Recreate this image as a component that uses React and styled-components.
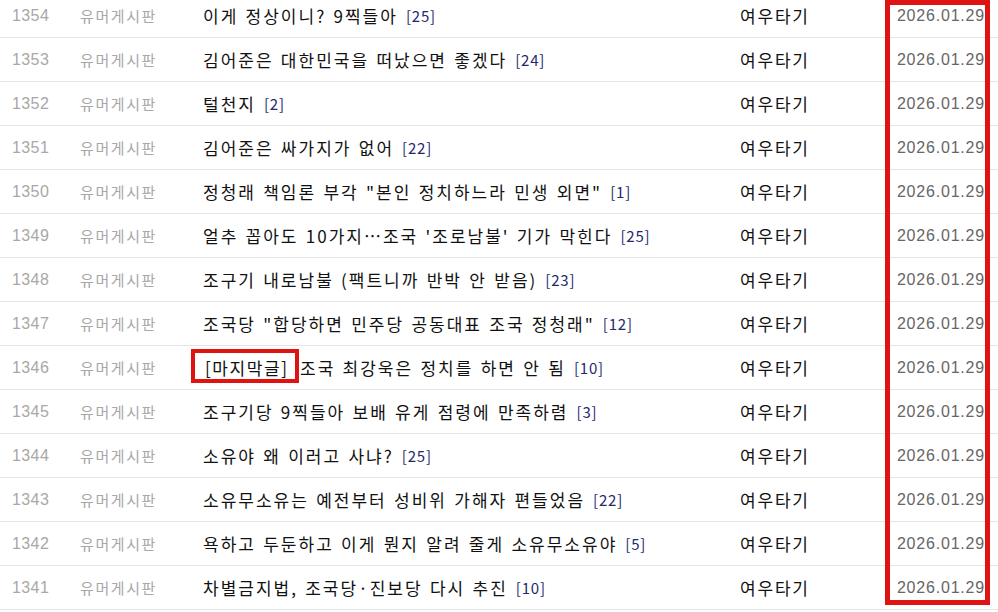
import React from 'react'
import styled, { createGlobalStyle } from 'styled-components'

const GlobalStyle = createGlobalStyle`
    html, body {
        margin: 0;
        padding: 0;
        background: #fff;
    }
    body {
        font-family: "Noto Sans CJK KR", "Noto Sans", sans-serif;
        overflow: hidden;
    }
`

const posts = [
    { no: 1354, title: '이게 정상이니? 9찍들아', count: 25 },
    { no: 1353, title: '김어준은 대한민국을 떠났으면 좋겠다', count: 24 },
    { no: 1352, title: '털천지', count: 2 },
    { no: 1351, title: '김어준은 싸가지가 없어', count: 22 },
    { no: 1350, title: '정청래 책임론 부각 "본인 정치하느라 민생 외면"', count: 1 },
    { no: 1349, title: "얼추 꼽아도 10가지…조국 '조로남불' 기가 막힌다", count: 25 },
    { no: 1348, title: '조구기 내로남불 (팩트니까 반박 안 받음)', count: 23 },
    { no: 1347, title: '조국당 "합당하면 민주당 공동대표 조국 정청래"', count: 12 },
    { no: 1346, tag: '[마지막글]', title: '조국 최강욱은 정치를 하면 안 됨', count: 10 },
    { no: 1345, title: '조구기당 9찍들아 보배 유게 점령에 만족하렴', count: 3 },
    { no: 1344, title: '소유야 왜 이러고 사냐?', count: 25 },
    { no: 1343, title: '소유무소유는 예전부터 성비위 가해자 편들었음', count: 22 },
    { no: 1342, title: '욕하고 두둔하고 이게 뭔지 알려 줄게 소유무소유야', count: 5 },
    { no: 1341, title: '차별금지법, 조국당·진보당 다시 추진', count: 10 },
]

const App = () => (
    <>
        <GlobalStyle />
        <Board>
            {posts.map(post => (
                <Row key={post.no}>
                    <Num>{post.no}</Num>
                    <Category>유머게시판</Category>
                    <Title>
                        {post.tag && <Tag>{post.tag}</Tag>}
                        <span>{post.title}</span>
                        <Count>[{post.count}]</Count>
                    </Title>
                    <Author>여우타기</Author>
                    <DateCell>2026.01.29</DateCell>
                </Row>
            ))}
            <DateHighlight />
        </Board>
    </>
)

export default App

const Board = styled.div`
    position: relative;
    width: 998px;
    height: 612px;
    overflow: hidden;
    display: flex;
    flex-direction: column;
    & > :first-child {
        margin-top: -6px;
    }
`

const Row = styled.div`
    flex: none;
    display: grid;
    grid-template-columns: 80px 123px 537px 1fr 120px;
    align-items: center;
    height: 44px;
    box-sizing: border-box;
    border-bottom: 1px solid #e4e4e4;
`

const Num = styled.div`
    padding-left: 12px;
    font-family: "Liberation Sans", Arial, sans-serif;
    font-size: 16px;
    letter-spacing: 0.4px;
    color: #a8a8a8;
`

const Category = styled.div`
    font-size: 15px;
    color: #a8a8a8;
    letter-spacing: 1.6px;
`

const Title = styled.div`
    align-self: stretch;
    display: flex;
    align-items: center;
    font-size: 17px;
    letter-spacing: 2px;
    word-spacing: 1.5px;
    color: #111;
    white-space: nowrap;
`

const Tag = styled.span`
    position: relative;
    align-self: stretch;
    display: flex;
    align-items: center;
    flex: none;
    width: 95px;
    margin-left: 2px;
    letter-spacing: 1.6px;
    &::after {
        content: '';
        position: absolute;
        left: -14px;
        top: 3px;
        width: 108px;
        height: 34px;
        box-sizing: border-box;
        border: 4px solid #e01313;
    }
`

const Count = styled.span`
    margin-left: 8px;
    font-size: 15px;
    letter-spacing: 0.8px;
    word-spacing: 0;
    color: #1f2a6e;
`

const Author = styled.div`
    font-size: 17px;
    letter-spacing: 1.8px;
    color: #111;
`

const DateCell = styled.div`
    text-align: right;
    padding-right: 13px;
    font-family: "Liberation Sans", Arial, sans-serif;
    font-size: 16px;
    letter-spacing: 0.8px;
    color: #666;
`

const DateHighlight = styled.div`
    position: absolute;
    left: 885px;
    top: 0;
    width: 105px;
    height: 605px;
    box-sizing: border-box;
    border: 5px solid #e01313;
    pointer-events: none;
`
